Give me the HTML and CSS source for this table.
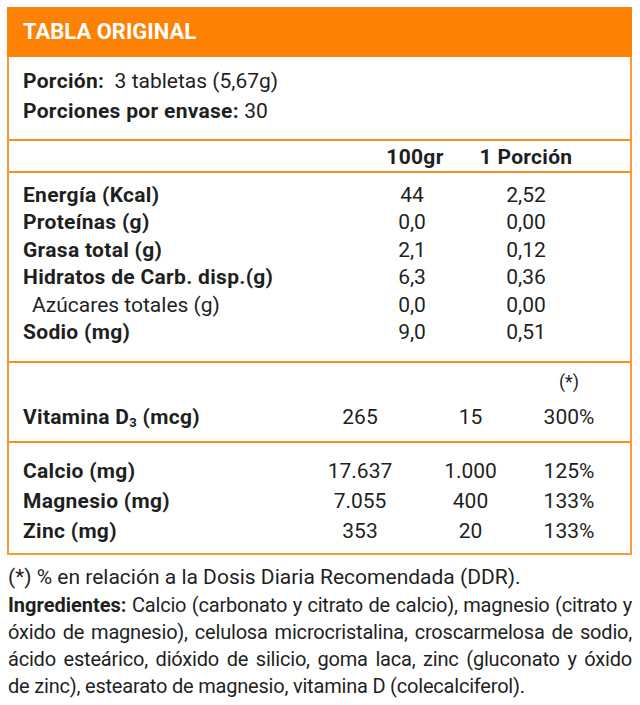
FILE: index.html
```html
<!DOCTYPE html>
<html lang="es">
<head>
<meta charset="utf-8">
<title>Tabla original</title>
<link rel="stylesheet" href="styles.css">
</head>
<body>
<div class="panel">
  <div class="title">TABLA ORIGINAL</div>
  <div class="serving">
    <div class="line"><b>Porción:</b>&nbsp; 3 tabletas (5,67g)</div>
    <div class="line"><b>Porciones por envase:</b> 30</div>
  </div>
  <div class="nutri">
    <div class="nhead">
      <span></span><b class="c">100gr</b><b class="c">1 Porción</b>
    </div>
    <div class="nrows">
      <b>Energía (Kcal)</b><span class="c">44</span><span class="c">2,52</span>
      <b>Proteínas (g)</b><span class="c">0,0</span><span class="c">0,00</span>
      <b>Grasa total (g)</b><span class="c">2,1</span><span class="c">0,12</span>
      <b>Hidratos de Carb. disp.(g)</b><span class="c">6,3</span><span class="c">0,36</span>
      <span class="sub">Azúcares totales (g)</span><span class="c">0,0</span><span class="c">0,00</span>
      <b>Sodio (mg)</b><span class="c">9,0</span><span class="c">0,51</span>
    </div>
  </div>
  <div class="vit">
    <div class="vrow star"><span></span><span></span><span></span><span class="c">(*)</span></div>
    <div class="vrow"><b>Vitamina D<sub>3</sub> (mcg)</b><span class="c">265</span><span class="c">15</span><span class="c">300%</span></div>
  </div>
  <div class="mins">
    <div class="vrow"><b>Calcio (mg)</b><span class="c">17.637</span><span class="c">1.000</span><span class="c">125%</span></div>
    <div class="vrow"><b>Magnesio (mg)</b><span class="c">7.055</span><span class="c">400</span><span class="c">133%</span></div>
    <div class="vrow"><b>Zinc (mg)</b><span class="c">353</span><span class="c">20</span><span class="c">133%</span></div>
  </div>
</div>
<div class="notes">
  <p class="foot">(*) % en relación a la Dosis Diaria Recomendada (DDR).</p>
  <p class="ingr">
    <span class="jl"><b>Ingredientes:</b> Calcio (carbonato y citrato de calcio), magnesio (citrato y</span>
    <span class="jl">óxido de magnesio), celulosa microcristalina, croscarmelosa de sodio,</span>
    <span class="jl">ácido esteárico, dióxido de silicio, goma laca, zinc (gluconato y óxido</span>
    <span class="ll">de zinc), estearato de magnesio, vitamina D (colecalciferol).</span>
  </p>
</div>
</body>
</html>
```
FILE: styles.css
```css
* { box-sizing: border-box; }
html, body { margin: 0; padding: 0; background: #ffffff; }
body {
  font-family: Roboto, "Liberation Sans", sans-serif;
  color: #1f1f1f;
  width: 640px;
  font-size: 21px;
}
b { font-weight: 700; letter-spacing: 0.3px; }
.panel {
  margin: 7px 0 0 7px;
  width: 625px;
  border: 2px solid #f99a3c;
  border-top: 0;
}
.title {
  height: 50px;
  background: #fd8204;
  color: #ffffff;
  font-weight: 700;
  font-size: 22px;
  line-height: 50px;
  margin: 0 -2px;
  padding-left: 16px;
}
.serving {
  padding: 9px 0 13px 14px;
}
.serving .line { line-height: 30px; }
.nutri {
  border-top: 2px solid #f7901e;
}
.nhead, .nrows {
  display: grid;
  grid-template-columns: 1fr 100px 128px;
  padding-right: 40px;
}
.nhead {
  padding-top: 2px;
  line-height: 28px;
  border-bottom: 2px solid #f7901e;
}
.nhead b:nth-child(2) { padding-left: 6px; }
.nrows {
  padding-top: 9px;
  padding-bottom: 15px;
  padding-left: 14px;
  line-height: 27.4px;
}
.c { text-align: center; }
.sub { padding-left: 9px; }
.vit {
  border-top: 2px solid #f7901e;
  padding: 6px 0 10px 14px;
}
.vrow {
  display: grid;
  grid-template-columns: 1fr 100px 116px 86px;
  padding-right: 18px;
  line-height: 29.7px;
}
.vrow > :nth-child(3) { padding-left: 5px; }
.vrow.star { line-height: 26px; font-size: 18px; margin-bottom: 8px; }
.vit .vrow:not(.star) { line-height: 28px; }
sub { font-size: 13px; vertical-align: -3px; line-height: 0; }
.mins {
  border-top: 2px solid #f7901e;
  padding: 14px 0 6px 14px;
}
.notes {
  padding: 0 8px;
}
.foot { margin: 7px 0 0 0; line-height: 30px; }
.ingr { margin: 0; line-height: 27px; font-size: 20px; letter-spacing: -0.2px; }
.ingr b { letter-spacing: 0; }
.jl { display: block; text-align: justify; text-align-last: justify; }
.ll { display: block; }
```
